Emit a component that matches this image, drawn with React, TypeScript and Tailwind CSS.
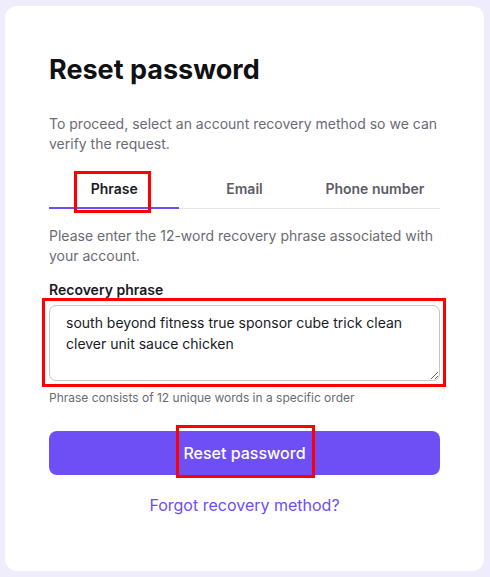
import React, { useState } from 'react';

const tabs = ['Phrase', 'Email', 'Phone number'];

const App = () => {
    const [active, setActive] = useState(0);
    const [phrase, setPhrase] = useState('south beyond fitness true sponsor cube trick clean clever unit sauce chicken');

    return (
        <div className="min-h-screen bg-[#efedfc] px-[5px] pt-[6px] pb-[6px]" style={{ fontFamily: 'Inter, "Noto Sans", sans-serif' }}>
            <div className="bg-white rounded-[12px] w-[479px] h-[565px] px-[44px] pt-[48px]">
                <h1 className="text-[27px] leading-8 font-bold text-[#111114]">Reset password</h1>

                <p className="mt-[28px] text-[14px] leading-5 text-[#6b6b73]">
                    To proceed, select an account recovery method so we can verify the request.
                </p>

                {/* Tabs */}
                <div className="mt-[16px] grid grid-cols-3 border-b border-[#e6e6ea]">
                    {tabs.map((t, i) => (
                        <button
                            key={t}
                            onClick={() => setActive(i)}
                            className={`relative pt-[9px] pb-[9px] text-[14px] leading-5 font-semibold text-center ${active === i ? 'text-[#1a1a1f]' : 'text-[#5c5c66]'}`}
                        >
                            {t}
                            {active === i && <span className="absolute left-0 right-0 -bottom-px h-[2px] bg-[#6c4ef7]" />}
                            {i === 0 && <span className="absolute left-[25px] top-[1px] w-[77px] h-[42px] border-[3px] border-[#ff0000]" />}
                        </button>
                    ))}
                </div>

                <p className="mt-[17px] text-[14px] leading-5 text-[#6b6b73]">
                    Please enter the 12-word recovery phrase associated with your account.
                </p>

                <label className="block mt-[14px] text-[14px] leading-5 font-semibold text-[#1a1a1f]">Recovery phrase</label>
                <div className="relative mt-[5px]">
                    <textarea
                        value={phrase}
                        onChange={(e) => setPhrase(e.target.value)}
                        className="block w-full h-[76px] border border-[#c4c4cc] rounded-[7px] px-[16px] pt-[6px] text-[14px] leading-[21px] text-[#1a1a1f] outline-none"
                    />
                    <span className="pointer-events-none absolute -left-[7px] -top-[7px] -right-[6px] -bottom-[6px] border-[3px] border-[#ff0000]" />
                </div>
                <p className="mt-[9px] text-[12px] leading-4 text-[#6b6b73]">Phrase consists of 12 unique words in a specific order</p>

                <div className="relative mt-[25px]">
                    <button className="w-full h-[44px] rounded-[8px] bg-[#6e4ff6] text-white text-[16px] font-medium">
                        Reset password
                    </button>
                    <span className="pointer-events-none absolute left-[127px] -top-[6px] w-[139px] h-[53px] border-[3px] border-[#ff0000]" />
                </div>

                <div className="mt-[18px] text-center">
                    <a href="#" className="text-[16px] leading-6 text-[#6c4ef7]">Forgot recovery method?</a>
                </div>
            </div>
        </div>
    );
};

export default App;
